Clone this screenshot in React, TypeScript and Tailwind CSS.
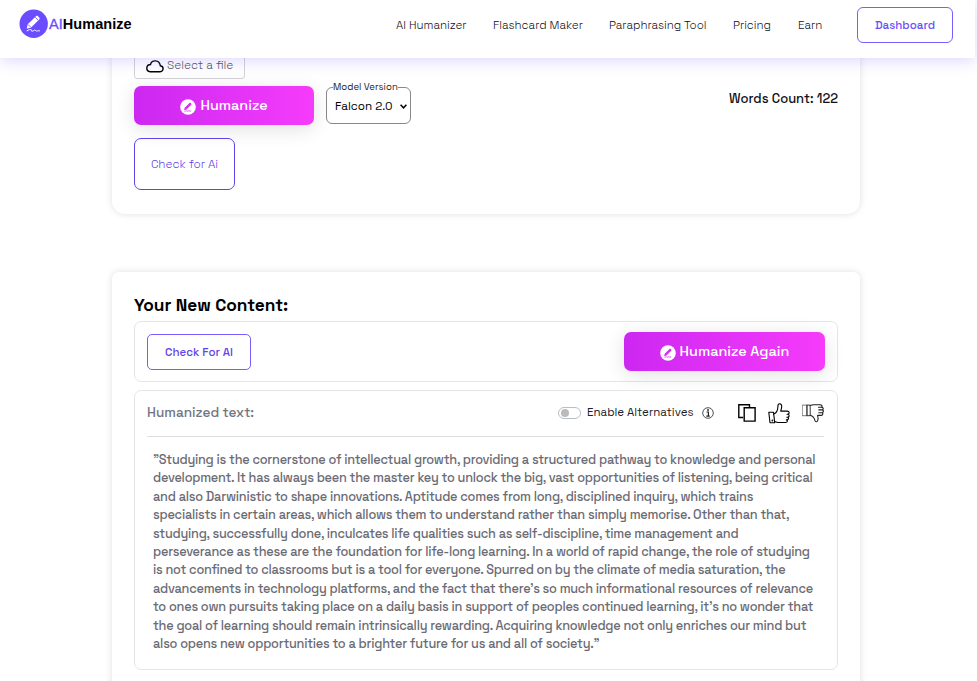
import { ReactNode } from 'react';

const navLinks = [
    { label: 'AI Humanizer', width: 'w-[71px]' },
    { label: 'Flashcard Maker', width: 'w-[90px]' },
    { label: 'Paraphrasing Tool', width: 'w-[98px]' },
    { label: 'Pricing', width: 'w-[39px]' },
    { label: 'Earn', width: 'w-[25px]' },
];

const humanizedLines = [
    '”Studying is the cornerstone of intellectual growth, providing a structured pathway to knowledge and personal',
    'development. It has always been the master key to unlock the big, vast opportunities of listening, being critical',
    'and also Darwinistic to shape innovations. Aptitude comes from long, disciplined inquiry, which trains',
    'specialists in certain areas, which allows them to understand rather than simply memorise. Other than that,',
    'studying, successfully done, inculcates life qualities such as self-discipline, time management and',
    'perseverance as these are the foundation for life-long learning. In a world of rapid change, the role of studying',
    'is not confined to classrooms but is a tool for everyone. Spurred on by the climate of media saturation, the',
    'advancements in technology platforms, and the fact that there’s so much informational resources of relevance',
    'to ones own pursuits taking place on a daily basis in support of peoples continued learning, it’s no wonder that',
    'the goal of learning should remain intrinsically rewarding. Acquiring knowledge not only enriches our mind but',
    'also opens new opportunities to a brighter future for us and all of society.”',
];

function Logo() {
    return (
        <svg width="29" height="29" viewBox="0 0 29 29" fill="none">
            <circle cx="14.7" cy="14.7" r="14.2" fill="#6b4dff" />
            <path d="M8.7 15.2 17 7.2c.6-.6 1.3-.6 1.9 0l1.3 1.3c.6.6.6 1.3 0 1.9l-8.1 8.2-4.4 1.2z" fill="#fff" />
            <path d="m16.2 8.2 3 3M9 15.4l2.8 2.8" stroke="#6b4dff" strokeWidth=".8" />
            <path d="M8 21.8c2.2-1.2 3.8-1.6 4.4-1 .5.6-.4 1.4.6 1.5 1.2.1 2-1.4 3-1.2.8.1.4.9 1.3 1 .9 0 1.7-.6 3.2-.3" stroke="#fff" strokeWidth="1" strokeLinecap="round" />
        </svg>
    );
}

function PencilBadge() {
    return (
        <svg width="16" height="16" viewBox="0 0 16 16" fill="none" className="mt-[2px] shrink-0">
            <circle cx="8" cy="8" r="7.8" fill="#fff" />
            <path d="m4.7 8.8 4.8-4.7c.4-.4.8-.4 1.2 0l.5.5c.4.4.4.8 0 1.2l-4.7 4.8-2.4.7z" fill="#d42bf2" />
            <path d="M4.5 12.4c1.5-.8 2.1-.7 2.5-.2.6.4 1.2-.6 1.8-.4.6.3 1.6.3 2.4.2" stroke="#d42bf2" strokeWidth=".8" />
        </svg>
    );
}

function GradientButton({ className, children }: { className: string, children: ReactNode }) {
    return (
        <button className={`flex h-[39px] items-center justify-center gap-1 rounded-[7px] bg-linear-to-r from-[#cc27f1] to-[#f63bfb] text-[14.4px] font-medium text-white shadow-[0_4px_20px_rgba(0,0,0,0.12)] ${className}`}>
            <PencilBadge />
            {children}
        </button>
    );
}

function InfoIcon() {
    return (
        <svg width="12" height="12" viewBox="0 0 12 12" fill="none" stroke="#222">
            <circle cx="6" cy="6" r="5.3" strokeWidth=".8" />
            <path d="M4.5 5h1.9v4M4.3 9.2h3.5" strokeWidth="1.2" />
            <circle cx="6" cy="3" r=".9" fill="#222" stroke="none" />
        </svg>
    );
}

function CopyIcon() {
    return (
        <svg width="18" height="18" viewBox="0 0 18 18" fill="none" stroke="#000" strokeWidth="1.4">
            <path d="M5.2 13.5H.8V.8h10.7v2.4" />
            <path d="M6.2 3.7h10.9v13.4H6.2z" />
        </svg>
    );
}

function ThumbUpIcon() {
    return (
        <svg width="22" height="21" viewBox="0 0 22 21" fill="none" stroke="#000" strokeWidth="1.1" strokeLinejoin="round" strokeLinecap="round">
            <path d="M.8 9.2h4.7l1.2 10.5H2z" />
            <path d="M5.7 11.1c3.1-1.4 4.2-4.2 4.2-7.7C9.9 1.5 10.6.7 11.6.7c1.5 0 2.2 1.4 2.1 3.1-.1 1.6-.5 2.8-1 4.3h6.7c2 0 2.3 2.4.8 3.1 1.5.7 1.1 2.7-.2 3 .9.8.5 2.4-.8 2.7.6 1.5-.2 2.6-1.8 2.6H9.7l-3.1-1" />
            <path d="M19 11.2h1M18.8 14.2H20M18.3 16.9h.8" />
            <circle cx="4.4" cy="17.5" r=".35" fill="#000" />
        </svg>
    );
}

function ThumbDownIcon() {
    return (
        <svg width="22" height="19" viewBox="0 0 22 19" fill="none" stroke="#222" strokeLinejoin="round" strokeLinecap="round">
            <path d="M.6 1.1h4.6v10.6H.6z" strokeWidth=".6" />
            <path d="M5.2 1.1h3v10.6h-3z" strokeWidth=".9" />
            <path d="M8.2 1.5 11 .7h7.1c1.8 0 2.3 1.2 1.7 2.4 1.4.3 1.7 1.8.9 2.7 1 .8.8 2.4-.3 2.9.9 1.2.1 2.7-1.3 2.7h-3.5c.4 1.6.6 3 .3 4.6-.3 2.2-2.5 2.4-3 .4-.5-2.5-1.4-4.2-4.7-5.2" strokeWidth="1.1" />
            <path d="M16.5 3.2h3.2M16.8 5.9h3.6M16.8 8.7h3.4" strokeWidth="1.1" />
        </svg>
    );
}

function Header() {
    return (
        <header className="relative z-10 flex h-[58px] w-[975px] items-start bg-white shadow-[0_3px_14px_rgba(107,77,255,0.22)]">
            <div className="ml-[19px] mt-[7px] flex items-center">
                <Logo />
                <span className="ml-px pt-[3px] font-['Liberation_Sans',Arial,sans-serif] text-[14.5px] font-bold leading-[29px] tracking-[0.05px] text-black">
                    <span className="font-normal text-[#6b4dff] [-webkit-text-stroke:0.3px_#6b4dff]">AI</span>Humanize
                </span>
            </div>
            <nav className="ml-auto mr-[34px] mt-[16px] flex gap-[26px] text-[11.5px] font-light leading-[18px] text-[#101019]">
                {navLinks.map((link) => (
                    <a key={link.label} href="#" className={`whitespace-nowrap ${link.width}`}>{link.label}</a>
                ))}
            </nav>
            <button className="mr-[22px] mt-[7px] h-[36px] w-[96px] rounded-[6px] border border-[#795dff] pt-[2px] text-[11.5px] font-medium text-[#6b4dff]">
                Dashboard
            </button>
        </header>
    );
}

export default function App() {
    return (
        <div className="h-[681px] w-full overflow-hidden bg-white font-['Space_Grotesk',Inter,sans-serif]">
            <Header />
            <main className="ml-[112px] w-[748px]">
                <section className="-mt-[20px] h-[176px] rounded-[13px] bg-white px-[22px] pt-[12px] shadow-[0_0_7px_rgba(0,0,0,0.13)]">
                    <div className="flex h-[29px] w-[111px] items-center gap-[3px] rounded-[3px] border border-[#d2d2d7] pl-[11px] text-[11.7px] font-light text-[#555560]">
                        <svg width="18" height="13" viewBox="0 0 18 13" fill="none" stroke="#000" strokeWidth="1.4" className="mt-[3px]">
                            <path d="M4.2 11.8h9.3c4.4 0 4.8-5.5.8-6.1C13.5-.6 5.7-.5 4.5 4.5.1 4.6-.8 11.1 4.2 11.8Z" />
                        </svg>
                        <span className="whitespace-nowrap pt-px">Select a file</span>
                    </div>
                    <div className="mt-[7px] flex">
                        <GradientButton className="w-[180px]">Humanize</GradientButton>
                        <fieldset className="-mt-[6px] ml-[12px] h-[44px] w-[85px] rounded-[6px] border border-[#888] pl-[4px]">
                            <legend className="ml-[2px] whitespace-nowrap text-[9.6px] leading-[14px] text-[#252525]">Model Version</legend>
                            <div className="flex items-center gap-[8px] pl-[4px] pt-[3px] text-[11.7px] leading-[18px] text-black">
                                <span className="w-[57px] whitespace-nowrap">Falcon 2.0</span>
                                <svg width="7" height="5" viewBox="0 0 7 5" fill="none" stroke="#000" strokeWidth="1.5">
                                    <path d="m.6.8 2.9 3L6.4.8" />
                                </svg>
                            </div>
                        </fieldset>
                        <p className="ml-auto mt-[4px] text-[13px] font-medium leading-[18px] text-[#101018]">Words Count: 122</p>
                    </div>
                    <button className="mt-[13px] h-[52px] w-[101px] rounded-[7px] border-[1.5px] border-[#6242eb] text-[11.7px] font-light text-[#6242eb]">
                        Check for Ai
                    </button>
                </section>

                <section className="mt-[58px] h-[440px] rounded-[7px] bg-white px-[22px] pt-[22px] shadow-[0_0_7px_rgba(0,0,0,0.13)]">
                    <h2 className="text-[17.3px] font-semibold leading-[22px] text-black">Your New Content:</h2>
                    <div className="mt-[5px] flex h-[61px] items-start rounded-[7px] border border-[#e5e5e7] pl-[12px] pr-[12px] pt-[12px]">
                        <button className="h-[36px] w-[104px] rounded-[5px] border border-[#795dff] pt-[2px] text-[11.5px] font-medium text-[#6242eb]">
                            Check For AI
                        </button>
                        <GradientButton className="-mt-[2px] ml-auto w-[201px]">Humanize Again</GradientButton>
                    </div>

                    <div className="mt-[8px] h-[280px] rounded-[7px] border border-[#e5e5e7] pl-[12px] pr-[13px]">
                        <div className="flex h-[46px] items-center border-b border-[#dedee0] pb-px">
                            <h3 className="text-[13.6px] font-medium text-[#737581]">Humanized text:</h3>
                            <div className="ml-auto flex h-[12px] w-[23px] items-center rounded-full border border-[#b8bdcb] pl-[2px]">
                                <span className="size-[8px] rounded-full bg-[#bbb]" />
                            </div>
                            <span className="ml-[6px] w-[107px] whitespace-nowrap text-[11.5px] text-[#20202a]">Enable Alternatives</span>
                            <div className="ml-[8px] flex items-center">
                                <InfoIcon />
                            </div>
                            <div className="ml-[24px] flex items-center gap-[12px]">
                                <CopyIcon />
                                <ThumbUpIcon />
                                <ThumbDownIcon />
                            </div>
                        </div>
                        <p className="ml-[6px] mt-[14px] text-[12.75px] font-medium leading-[18.4px] tracking-[-0.24px] text-[#6b6b74]">
                            {humanizedLines.map((line) => (
                                <span key={line} className="block whitespace-nowrap">{line}</span>
                            ))}
                        </p>
                    </div>
                </section>
            </main>
        </div>
    );
}
